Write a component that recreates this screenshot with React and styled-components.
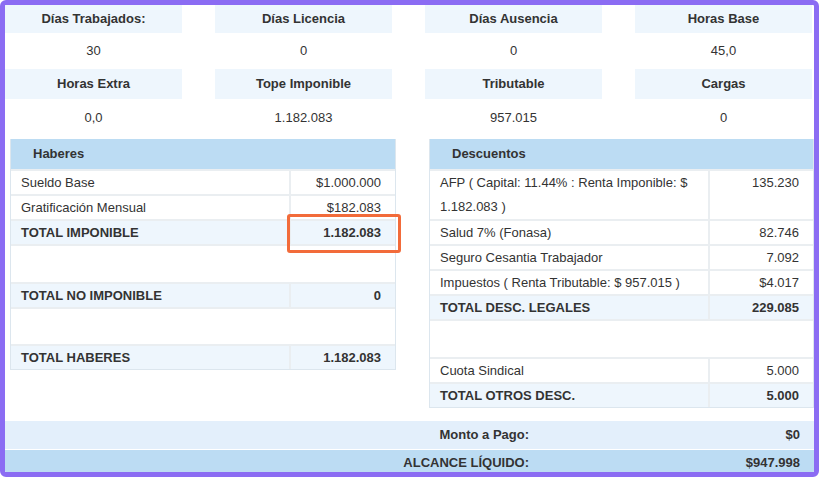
import React from "react";
import styled, { createGlobalStyle } from "styled-components";

const Global = createGlobalStyle`
  html, body { margin: 0; padding: 0; background: #fff; }
  body { font-family: "Liberation Sans", Arial, sans-serif; color: #333; font-size: 13px; }
`;

const Frame = styled.div`
  box-sizing: border-box;
  width: 819px;
  height: 477px;
  border: 5px solid #8b6cf3;
  border-radius: 6px;
  overflow: hidden;
  background: #fff;
`;

const Stats = styled.div`
  display: grid;
  grid-template-columns: repeat(4, 177px);
  column-gap: 33px;
`;

const StatHead = styled.div`
  background: #eef6fd;
  font-weight: bold;
  text-align: center;
  height: ${(p) => p.h}px;
  line-height: ${(p) => p.h}px;
`;

const StatValue = styled.div`
  text-align: center;
  height: ${(p) => p.h}px;
  line-height: ${(p) => p.h}px;
`;

const Panels = styled.div`
  display: flex;
  justify-content: space-between;
  padding: 2px 0 0 5px;
  align-items: flex-start;
`;

const Panel = styled.div`
  width: ${(p) => p.w}px;
  border: 1px solid #dce6ee;
  border-top: none;
  box-sizing: border-box;
`;

const PanelHead = styled.div`
  background: #bcdcf3;
  font-weight: bold;
  height: 30px;
  line-height: 30px;
  padding-left: ${(p) => p.pad}px;
`;

const Row = styled.div`
  display: grid;
  grid-template-columns: 1fr ${(p) => p.vw}px;
  min-height: ${(p) => p.h || 23}px;
  border-top: 2px solid #eaeef1;
  background: ${(p) => (p.total ? "#eef6fd" : "#fff")};
  font-weight: ${(p) => (p.total ? "bold" : "normal")};
`;

const Label = styled.div`
  padding: 0 10px;
  line-height: ${(p) => p.lh || 23}px;
`;

const Value = styled.div`
  position: relative;
  border-left: 2px solid ${(p) => (p.blank ? "transparent" : "#eaeef1")};
  text-align: right;
  padding: 0 14px 0 0;
  line-height: 23px;
`;

const Highlight = styled.div`
  position: absolute;
  left: -4px;
  right: -6px;
  top: -7px;
  bottom: -9px;
  border: 3px solid #f26b3a;
  border-radius: 3px;
`;

const Summary = styled.div`
  margin-top: 13px;
`;

const SumRow = styled.div`
  display: grid;
  grid-template-columns: 1fr 135px;
  height: ${(p) => p.h}px;
  line-height: ${(p) => p.h}px;
  background: ${(p) => p.bg};
  font-weight: bold;
  text-align: right;
  margin-top: ${(p) => p.mt || 0}px;
`;

const SumLabel = styled.div`
  padding-right: 150px;
`;

const SumValue = styled.div`
  padding-right: 14px;
`;

const stats = [
  ["Días Trabajados:", "30", "Horas Extra", "0,0"],
  ["Días Licencia", "0", "Tope Imponible", "1.182.083"],
  ["Días Ausencia", "0", "Tributable", "957.015"],
  ["Horas Base", "45,0", "Cargas", "0"],
];

export default function App() {
  return (
    <>
      <Global />
      <Frame>
        <Stats>
          {stats.map((s) => <StatHead key={s[0]} h={28}>{s[0]}</StatHead>)}
          {stats.map((s) => <StatValue key={s[0] + "v"} h={36}>{s[1]}</StatValue>)}
          {stats.map((s) => <StatHead key={s[2]} h={30}>{s[2]}</StatHead>)}
          {stats.map((s) => <StatValue key={s[2] + "v"} h={38}>{s[3]}</StatValue>)}
        </Stats>
        <Panels>
          <Panel w={386}>
            <PanelHead pad={22}>Haberes</PanelHead>
            <Row vw={106}><Label>Sueldo Base</Label><Value>$1.000.000</Value></Row>
            <Row vw={106}><Label>Gratificación Mensual</Label><Value>$182.083</Value></Row>
            <Row vw={106} total><Label>TOTAL IMPONIBLE</Label><Value>1.182.083<Highlight /></Value></Row>
            <Row vw={106} h={36}><Label /><Value blank /></Row>
            <Row vw={106} total><Label>TOTAL NO IMPONIBLE</Label><Value>0</Value></Row>
            <Row vw={106} h={35}><Label /><Value blank /></Row>
            <Row vw={106} total><Label>TOTAL HABERES</Label><Value>1.182.083</Value></Row>
          </Panel>
          <Panel w={385}>
            <PanelHead pad={22}>Descuentos</PanelHead>
            <Row vw={105} h={47}>
              <Label lh={24}>AFP ( Capital: 11.44% : Renta Imponible: $ 1.182.083 )</Label>
              <Value>135.230</Value>
            </Row>
            <Row vw={105}><Label>Salud 7% (Fonasa)</Label><Value>82.746</Value></Row>
            <Row vw={105}><Label>Seguro Cesantia Trabajador</Label><Value>7.092</Value></Row>
            <Row vw={105}><Label>Impuestos ( Renta Tributable: $ 957.015 )</Label><Value>$4.017</Value></Row>
            <Row vw={105} total><Label>TOTAL DESC. LEGALES</Label><Value>229.085</Value></Row>
            <Row vw={105} h={36}><Label /><Value blank /></Row>
            <Row vw={105}><Label>Cuota Sindical</Label><Value>5.000</Value></Row>
            <Row vw={105} total><Label>TOTAL OTROS DESC.</Label><Value>5.000</Value></Row>
          </Panel>
        </Panels>
        <Summary>
          <SumRow h={28} bg="#e3effb"><SumLabel>Monto a Pago:</SumLabel><SumValue>$0</SumValue></SumRow>
          <SumRow h={26} bg="#bcdcf3" mt={1}><SumLabel>ALCANCE LÍQUIDO:</SumLabel><SumValue>$947.998</SumValue></SumRow>
        </Summary>
      </Frame>
    </>
  );
}
